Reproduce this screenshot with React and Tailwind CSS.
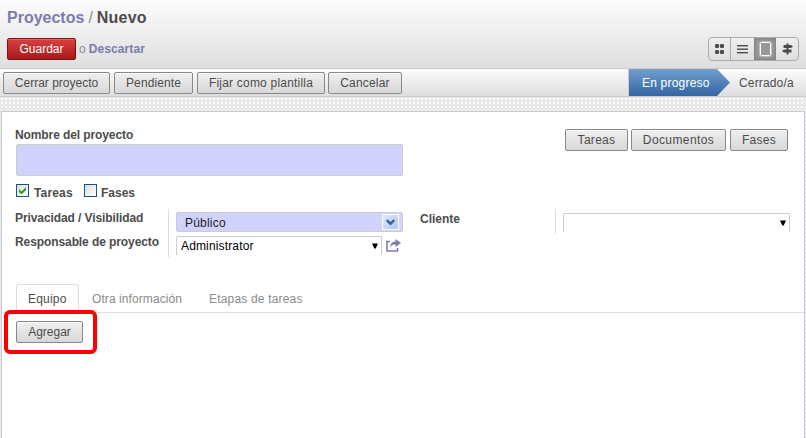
function Button({ className = '', children }) {
  return (
    <button
      className={`h-[22px] shrink-0 whitespace-nowrap rounded-[2px] border border-[#888888] bg-linear-to-b from-[#efefef] to-[#d8d8d8] text-center text-[12px] leading-[20px] text-[#4c4c4c] shadow-[inset_0_1px_0_rgba(255,255,255,0.7)] ${className}`}
    >
      {children}
    </button>
  );
}

function Checkbox({ checked }) {
  return (
    <span className="flex size-[13px] items-center justify-center border border-[#1c5180] bg-linear-to-br from-[#dcdcd7] to-white">
      {checked && (
        <svg width="7" height="7" viewBox="0 0 7 7" fill="#21a121">
          <path d="M0 2V5L2 7H3L7 3V0L2.5 4.5Z" />
        </svg>
      )}
    </span>
  );
}

function Caret() {
  return (
    <svg width="6" height="6" viewBox="0 0 6 6" fill="#000">
      <path d="M0 0.5H6L3.7 5.5H2.3Z" />
    </svg>
  );
}

function ViewSwitcher() {
  return (
    <div className="mt-[37px] mr-[7px] flex h-6 w-[91px] overflow-hidden rounded-[4px] border border-[#ababab] bg-linear-to-b from-[#efefef] to-[#dedede]">
      <span className="flex w-[22px] items-center justify-center border-r border-[#ababab]">
        <svg width="9" height="10" viewBox="0 0 9 10" fill="#4c4c4c">
          <rect x="0" y="0" width="4" height="4" rx="1.3" />
          <rect x="5" y="0" width="4" height="4" rx="1.3" />
          <rect x="0" y="6" width="4" height="4" rx="1.3" />
          <rect x="5" y="6" width="4" height="4" rx="1.3" />
        </svg>
      </span>
      <span className="flex w-[23px] items-center justify-center">
        <svg width="11" height="9" viewBox="0 0 11 9" fill="#4c4c4c">
          <rect y="0" width="11" height="1.4" />
          <rect y="3.5" width="11" height="1.4" />
          <rect y="7" width="11" height="1.4" />
        </svg>
      </span>
      <span className="flex w-[22px] items-center justify-center bg-[#999999] shadow-[inset_0_0_3px_1px_#7d7d7d]">
        <span className="h-[14px] w-[11px] rounded-[1.5px] border-[1.5px] border-white shadow-[0_0_0_0.5px_rgba(255,255,255,0.7)]" />
      </span>
      <span className="flex w-[22px] items-center justify-center">
        <svg width="11" height="12" viewBox="0 0 11 12" fill="#4c4c4c">
          <rect x="4.5" y="0.5" width="2" height="11" />
          <path d="M1.5 2H9L11 3.5L9 5H1.5Z" />
          <path d="M9.5 6.5H2L0 8L2 9.5H9.5Z" />
        </svg>
      </span>
    </div>
  );
}

export default function App() {
  return (
    <div className="relative flex h-[438px] w-[806px] flex-col overflow-hidden bg-white font-['Liberation_Sans',Arial,sans-serif] text-[12px] text-[#4c4c4c]">
      <header className="flex h-[69px] shrink-0 justify-between border-b border-[#cacaca] bg-linear-to-b from-[#fcfcfc] to-[#dedede]">
        <div className="pl-[7px]">
          <h1 className="mt-[8px] h-5 whitespace-nowrap text-[16px] font-bold leading-5">
            <a className="text-[#7c7bad]">Proyectos</a>
            <span className="mx-[4px] font-normal text-[#8a8a8a]">/</span>
            <span className="tracking-[0.2px]">Nuevo</span>
          </h1>
          <div className="mt-[10px] flex items-center">
            <button className="h-[22px] w-[69px] rounded-[2px] border border-[#7c1010] bg-linear-to-b from-[#dc3f3f] to-[#a81818] pt-px text-[12px] leading-[19px] text-white shadow-[inset_0_1px_0_rgba(255,255,255,0.2)]">
              Guardar
            </button>
            <span className="ml-[3px] text-[#8a8a8a]">o</span>
            <a className="ml-[3px] font-bold tracking-[0.1px] text-[#7c7bad]">Descartar</a>
          </div>
        </div>
        <ViewSwitcher />
      </header>

      <div className="flex h-7 shrink-0 justify-between border-b border-[#cacaca] bg-linear-to-b from-[#fcfcfc] to-[#dedede]">
        <div className="flex pt-[3px] pl-[3px]">
          <Button className="w-[107px]">Cerrar proyecto</Button>
          <Button className="ml-[4px] w-[79px] tracking-[0.1px]">Pendiente</Button>
          <Button className="ml-[4px] w-[128px] tracking-[0.2px]">Fijar como plantilla</Button>
          <Button className="ml-[3px] w-[74px] tracking-[0.2px]">Cancelar</Button>
        </div>
        <div className="flex leading-[28px]">
          <div className="w-[102px] border-l border-[#cacaca] bg-linear-to-b from-[#729fcf] to-[#3465a4] pl-[13px] tracking-[0.2px] text-white [clip-path:polygon(0_0,89px_0,102px_50%,89px_100%,0_100%)]">
            En progreso
          </div>
          <div className="w-[76px] whitespace-nowrap pl-[9px] tracking-[0.15px]">Cerrado/a</div>
        </div>
      </div>

      <main className="flex-1 bg-[#fcfcfc] bg-[radial-gradient(circle,transparent_1px,#e6e6e6_1.5px,#e6e6e6_2px,transparent_2.4px)] bg-[size:4px_4px] pt-[14px] pr-px pl-px">
        <section className="h-full border border-b-0 border-[#c8c8d3] bg-white">
          <div className="flex h-[97px] justify-between pr-[16px] pl-[14px]">
            <div>
              <label className="mt-[15px] -ml-px block h-[17px] font-bold leading-[17px] tracking-[-0.1px]">
                Nombre del proyecto
              </label>
              <div className="h-8 w-[387px] rounded-[2px] border border-[#cccccc] bg-[#d2d2ff]" />
              <div className="mt-[8px] flex h-4 font-bold">
                <Checkbox checked />
                <span className="ml-[5px] w-[50px] leading-[18px] tracking-[0.15px]">Tareas</span>
                <Checkbox />
                <span className="ml-[4px] leading-[18px]">Fases</span>
              </div>
            </div>
            <div className="mt-[17px] flex">
              <Button className="w-[63px] tracking-[0.3px]">Tareas</Button>
              <Button className="ml-[3px] w-[95px] tracking-[0.4px]">Documentos</Button>
              <Button className="ml-[4px] w-[58px] tracking-[0.25px]">Fases</Button>
            </div>
          </div>

          <div className="flex h-[75px] pl-[13px]">
            <div className="h-12 w-[154px] border-r border-[#dddddd] font-bold tracking-[-0.09px]">
              <div className="h-6 whitespace-nowrap leading-[18px]">Privacidad / Visibilidad</div>
              <div className="h-6 whitespace-nowrap leading-[18px]">Responsable de proyecto</div>
            </div>
            <div className="w-[251px] pt-[3px] pl-[7px] text-black">
              <div className="flex h-5 w-[227px] items-center justify-between rounded-[2px] border border-[#cccccc] bg-[#d2d2ff] pr-[3px] pl-[8px] text-[#222222]">
                <span className="pt-[2px] leading-[18px] tracking-[0.2px]">Público</span>
                <span className="flex h-4 w-[17px] items-center justify-center border border-white bg-linear-to-br from-[#dbe8ff] to-[#adc8f7]">
                  <svg width="9" height="7" viewBox="0 0 9 7" fill="none" stroke="#40618f" strokeWidth="2.4">
                    <path d="M0.8 1L4.5 4.7L8.2 1" />
                  </svg>
                </span>
              </div>
              <div className="mt-[4px] flex">
                <div className="flex h-[19px] w-[206px] items-center justify-between rounded-t-[2px] border border-b-0 border-[#cccccc] pr-[3px] pl-[4px]">
                  <span className="leading-[18px] tracking-[0.15px]">Administrator</span>
                  <Caret />
                </div>
                <svg className="mt-[3px] ml-[4px]" width="15" height="13" viewBox="0 0 15 13" fill="none">
                  <path d="M4 2.5H1V12H11.5V9" stroke="#7c7bad" strokeWidth="1.6" />
                  <path d="M9.5 0L15 4L9.5 8V5.6C7 5.4 5.3 6.4 4.2 8.8C4.2 5 6 2.6 9.5 2.4Z" fill="#7c7bad" />
                </svg>
              </div>
            </div>
            <div className="h-[25px] w-[136px] border-r border-[#dddddd] font-bold leading-5">Cliente</div>
            <div className="mt-[4px] ml-[7px] flex h-[19px] w-[227px] items-center justify-end rounded-t-[2px] border border-b-0 border-[#cccccc] pr-[3px]">
              <Caret />
            </div>
          </div>

          <nav className="flex h-[29px] border-b border-[#dddddd] pl-[14px] leading-[28px] text-[#8a8a8a]">
            <span className="h-[29px] w-[63px] rounded-t-[3px] border border-b-0 border-[#dddddd] bg-white pl-[11px] tracking-[0.2px] text-[#4c4c4c]">
              Equipo
            </span>
            <span className="ml-[13px] w-[117px] whitespace-nowrap pt-px tracking-[0.08px]">Otra información</span>
            <span className="whitespace-nowrap pt-px tracking-[0.18px]">Etapas de tareas</span>
          </nav>
          <div className="pt-[8px] pl-[14px]">
            <Button className="w-[67px]">Agregar</Button>
          </div>
        </section>
      </main>
      <div className="absolute top-[310px] left-[4px] h-[44px] w-[93px] rounded-[6px] border-4 border-[#ff0000]" />
    </div>
  );
}
